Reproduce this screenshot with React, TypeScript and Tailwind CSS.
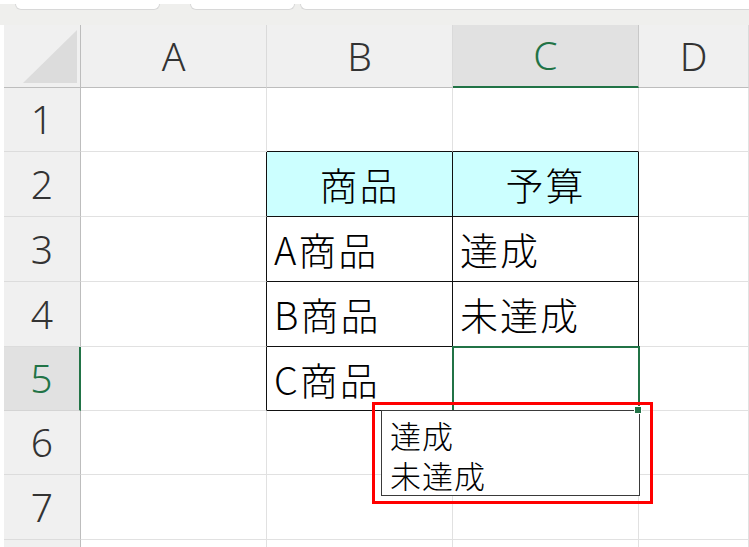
import React from 'react';

const COLS = ['A', 'B', 'C', 'D'];
const COL_W = [186, 186, 186, 110];
const ROW_H = [64, 65, 65, 65, 64, 64, 65, 20];

type Cell = { text?: string; center?: boolean; fill?: boolean; boxR?: boolean; boxB?: boolean };

// sheet contents, keyed by row then column index
const cells: Record<number, Record<number, Cell>> = {
  1: { 1: { boxB: true }, 2: { boxB: true } },
  2: { 0: { boxR: true }, 1: { text: '商品', center: true, fill: true, boxR: true, boxB: true }, 2: { text: '予算', center: true, fill: true, boxR: true, boxB: true } },
  3: { 0: { boxR: true }, 1: { text: 'A商品', boxR: true, boxB: true }, 2: { text: '達成', boxR: true, boxB: true } },
  4: { 0: { boxR: true }, 1: { text: 'B商品', boxR: true, boxB: true }, 2: { text: '未達成', boxR: true, boxB: true } },
  5: { 0: { boxR: true }, 1: { text: 'C商品', boxR: true, boxB: true }, 2: { boxR: true, boxB: true } },
};

const cellFont = { fontFamily: '"Noto Sans CJK JP", "Noto Sans", sans-serif' };
const headFont = { fontFamily: '"Noto Sans", "Open Sans", sans-serif' };

const TabStrip = () => (
  <div className="h-[25px] bg-[#efefed] relative flex">
    <div className="absolute inset-x-0 top-0 h-[4px] bg-white" />
    <div className="flex items-start w-full">
      <div className="ml-[15px] w-[145px] h-[10px] bg-white rounded-b-[6px] border-b border-x border-[#d8d8d8]" />
      <div className="ml-[30px] w-[105px] h-[10px] bg-white rounded-b-[6px] border-b border-x border-[#d8d8d8]" />
      <div className="ml-[5px] flex-1 h-[10px] bg-white rounded-bl-[6px] border-b border-l border-[#d8d8d8]" />
    </div>
  </div>
);

const HeaderRow = () => (
  <div className="flex h-[63px]">
    <div className="w-[4px] bg-white" />
    <div className="w-[77px] bg-[#f0f0f0] border-r border-b border-[#bdbdbd] relative">
      <div
        className="absolute left-[19px] top-[5px] w-[54px] h-[53px] bg-[#dcdcdc]"
        style={{ clipPath: 'polygon(100% 0, 100% 100%, 0 100%)' }}
      />
    </div>
    {COLS.map((c, i) => {
      const active = c === 'C';
      return (
        <div
          key={c}
          style={{ width: COL_W[i], ...headFont }}
          className={
            active
              ? 'shrink-0 bg-[#e1e1e1] border-r border-[#c8c8c8] border-b-2 border-b-[#217346] flex items-center justify-center text-[39px] font-light text-[#217346]'
              : 'shrink-0 bg-[#f0f0f0] border-r border-[#dadada] border-b border-b-[#bdbdbd] flex items-center justify-center text-[39px] font-light text-[#333]'
          }
        >
          {c}
        </div>
      );
    })}
  </div>
);

const SheetRow = ({ row, h }: { row: number; h: number }) => {
  const active = row === 5;
  return (
    <div className="flex" style={{ height: h }}>
      <div className="w-[4px] bg-white" />
      <div
        style={headFont}
        className={
          active
            ? 'w-[77px] shrink-0 bg-[#e1e1e1] border-b border-[#d4d4d4] border-r-2 border-r-[#217346] flex items-center justify-center text-[39px] font-light text-[#217346]'
            : 'w-[77px] shrink-0 bg-[#f0f0f0] border-b border-[#dcdcdc] border-r border-r-[#bdbdbd] flex items-center justify-center text-[39px] font-light text-[#333]'
        }
      >
        {row <= 7 ? row : ''}
      </div>
      {COLS.map((c, i) => {
        const cell = cells[row]?.[i] ?? {};
        return (
          <div
            key={c}
            style={{ width: COL_W[i], ...cellFont }}
            className={[
              'shrink-0 flex items-center text-[38px] tracking-[2px] font-light text-black leading-none border-r border-b',
              cell.boxR ? 'border-r-[#111]' : 'border-r-[#e1e1e1]',
              cell.boxB ? 'border-b-[#111]' : 'border-b-[#e1e1e1]',
              cell.fill ? 'bg-[#ccffff]' : 'bg-white',
              cell.center ? 'justify-center' : 'pl-[7px]',
            ].join(' ')}
          >
            {cell.text}
          </div>
        );
      })}
    </div>
  );
};

export default function App() {
  return (
    <div className="relative w-[749px] h-[547px] overflow-hidden bg-white">
      <TabStrip />
      <HeaderRow />
      {ROW_H.map((h, i) => (
        <SheetRow key={i} row={i + 1} h={h} />
      ))}

      {/* active cell C5 */}
      <div className="absolute left-[452px] top-[346px] w-[188px] h-[66px] border-2 border-[#217346]" />

      {/* validation dropdown, both options in one text block */}
      <div
        style={cellFont}
        className="absolute left-[381px] top-[410px] w-[259px] h-[86px] bg-white border border-[#3a3a3a] pl-[8px] pt-[4px] text-[31px] tracking-[1px] font-light leading-[40px] text-black whitespace-pre-line"
      >
        {'達成\n未達成'}
      </div>

      {/* fill handle */}
      <div className="absolute left-[634px] top-[406px] w-[8px] h-[8px] bg-[#217346] border border-white" />

      {/* callout */}
      <div className="absolute left-[372px] top-[402px] w-[281px] h-[102px] border-[3px] border-[#ff0000]" />
    </div>
  );
}
